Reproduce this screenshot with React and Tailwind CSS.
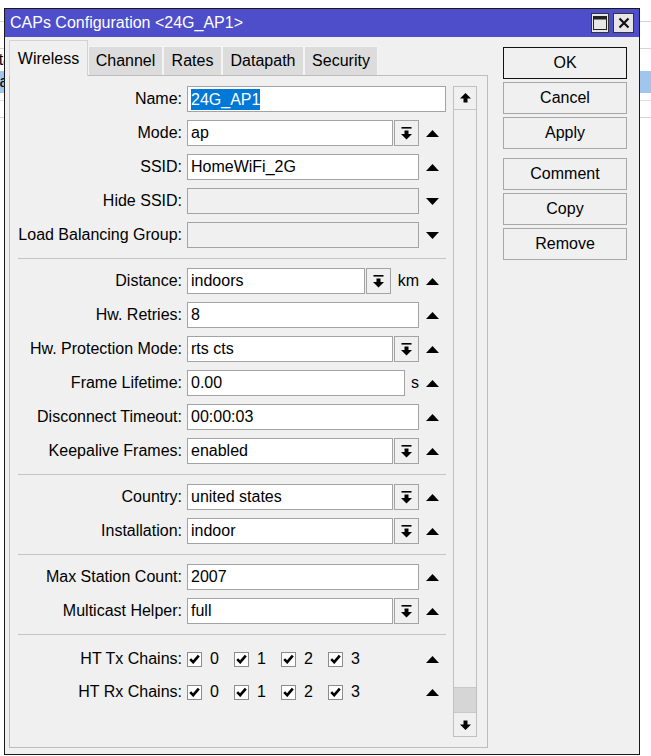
import React from "react";

const FONT = "font-['Liberation_Sans',Arial,sans-serif]";

function UpTri() {
  return (
    <svg width="13" height="7" viewBox="0 0 13 7">
      <polygon points="0,7 13,7 6.5,0" fill="#000" />
    </svg>
  );
}
function DownTri() {
  return (
    <svg width="13" height="7" viewBox="0 0 13 7">
      <polygon points="0,0 13,0 6.5,7" fill="#000" />
    </svg>
  );
}
function DropIcon() {
  return (
    <svg width="11" height="13" viewBox="0 0 11 13">
      <rect x="0.5" y="0" width="10" height="1.6" fill="#000" />
      <rect x="3.5" y="3.5" width="4" height="3.5" fill="#000" />
      <polygon points="0,7 11,7 5.5,12.5" fill="#000" />
    </svg>
  );
}
function ScrollArrow({ down }) {
  return (
    <svg width="11" height="10" viewBox="0 0 11 10" style={down ? { transform: "rotate(180deg)" } : undefined}>
      <polygon points="0,5.5 11,5.5 5.5,0" fill="#000" />
      <rect x="3.5" y="5" width="4" height="4.5" fill="#000" />
    </svg>
  );
}
function Check() {
  return (
    <div className="w-[15px] h-[15px] bg-white border border-[#8c8c8c] flex items-center justify-center">
      <svg width="11" height="10" viewBox="0 0 11 10">
        <path d="M1.2 5.2 L4.2 8.2 L9.8 1.6" stroke="#000" strokeWidth="2.6" fill="none" />
      </svg>
    </div>
  );
}

function Input({ children, className = "", disabled }) {
  return (
    <div
      className={`h-[26px] border border-[#a3a3a3] flex items-center pl-[3px] whitespace-nowrap overflow-hidden ${
        disabled ? "bg-[#f0f0f0]" : "bg-white"
      } ${className}`}
    >
      {children}
    </div>
  );
}
function DropBtn() {
  return (
    <div className="w-[25px] h-[26px] ml-[1px] border border-[#a3a3a3] bg-[#f0f0f0] flex items-center justify-center shrink-0">
      <DropIcon />
    </div>
  );
}

function Row({ label, children, arrow = "up", h = "h-[26px]" }) {
  return (
    <div className={`flex items-center ${h}`}>
      <span className="w-[172px] text-right shrink-0 whitespace-nowrap">{label}</span>
      <div className="ml-[5px] flex items-center">{children}</div>
      {arrow && (
        <div className="w-[27px] flex justify-center">{arrow === "up" ? <UpTri /> : <DownTri />}</div>
      )}
    </div>
  );
}

function Field({ value, disabled }) {
  return <Input className="w-[232px]" disabled={disabled}>{value}</Input>;
}
function Combo({ value }) {
  return (
    <div className="flex w-[232px]">
      <Input className="flex-1">{value}</Input>
      <DropBtn />
    </div>
  );
}

function Sep() {
  return <div className="h-px bg-[#c4c4c4] ml-[8px] mt-[10px] mb-[9px]" />;
}

function Chains({ label }) {
  return (
    <Row label={label} h="h-[30px]">
      <div className="flex w-[232px] items-center">
        {["0", "1", "2", "3"].map((d) => (
          <div key={d} className="flex items-center w-[47px]">
            <Check />
            <span className="ml-[8px]">{d}</span>
          </div>
        ))}
      </div>
    </Row>
  );
}

function Btn({ children, primary, className = "" }) {
  return (
    <div
      className={`h-[32px] flex items-center justify-center bg-[#f0f0f0] border ${
        primary ? "border-[#111]" : "border-[#a8a8a8]"
      } ${className}`}
    >
      {children}
    </div>
  );
}

const tabs = [
  { t: "Channel", w: "w-[75px]" },
  { t: "Rates", w: "w-[59px]" },
  { t: "Datapath", w: "w-[82px]" },
  { t: "Security", w: "w-[74px]" },
];

export default function App() {
  return (
    <div className={`relative w-[651px] h-[756px] bg-white overflow-hidden text-[16px] text-black ${FONT}`}>
      {/* background list behind the window */}
      <div className="flex flex-col">
        <div className="h-[22px] border-b border-[#d4d4d4]" />
        <div className="h-[27px] border-b border-[#d4d4d4]" />
        <div className="h-[22px] flex items-center">
          <span className="-ml-[12px]">Sta</span>
        </div>
        <div className="h-[22px] bg-[#a2c5ee] flex items-center">
          <span className="-ml-[12px]">Ca</span>
        </div>
        <div className="h-[8px] border-b border-[#e0e0e0]" />
        <div className="h-[17px] border-b border-[#d4d4d4]" />
      </div>

      {/* window */}
      <div className="absolute left-[4px] top-[8px] w-[636px] h-[747px] border border-[#1a1a1a] bg-[#f0f0f0] flex flex-col">
        <div className="h-[28px] bg-[#4e4ecb] flex items-center justify-between pl-[5px] pr-[5px] shrink-0">
          <span className="text-white whitespace-nowrap">CAPs Configuration &lt;24G_AP1&gt;</span>
          <div className="flex items-center gap-[4px]">
            <div className="w-[18px] h-[20px] bg-[#e6e6e6] border border-[#333] flex items-center justify-center">
              <svg width="14" height="14" viewBox="0 0 14 14">
                <rect x="0.5" y="0.5" width="13" height="13" fill="none" stroke="#222" strokeWidth="1" />
                <rect x="0.5" y="0.5" width="13" height="3" fill="#222" />
              </svg>
            </div>
            <div className="w-[21px] h-[20px] bg-[#e6e6e6] border border-[#333] flex items-center justify-center">
              <svg width="12" height="12" viewBox="0 0 12 12">
                <path d="M1.5 1.5 L10.5 10.5 M10.5 1.5 L1.5 10.5" stroke="#111" strokeWidth="2.2" />
              </svg>
            </div>
          </div>
        </div>

        <div className="flex pl-[4px] pt-[3px]">
          {/* left: tabs + panel */}
          <div className="flex flex-col w-[479px]">
            <div className="flex items-end h-[35px]">
              <div className="relative z-10 w-[79px] h-[36px] -mb-px bg-[#f0f0f0] border-l border-t border-r border-[#d2d2d2] flex items-center justify-center">
                Wireless
              </div>
              {tabs.map((t) => (
                <div
                  key={t.t}
                  className={`${t.w} h-[29px] bg-[#dcdcdc] border-l border-t border-r border-[#f4f4f4] flex items-center justify-center`}
                >
                  {t.t}
                </div>
              ))}
            </div>
            <div className="h-[673px] border border-[#bdbdbd] flex">
              <div className="w-[436px] pt-[10px] flex flex-col">
                <div className="flex flex-col gap-[8px]">
                  <Row label="Name:" arrow={null}>
                    <Input className="w-[259px]">
                      <span className="bg-[#0078d7] text-white leading-[21px]">24G_AP1</span>
                    </Input>
                  </Row>
                  <Row label="Mode:">
                    <Combo value="ap" />
                  </Row>
                  <Row label="SSID:">
                    <Field value="HomeWiFi_2G" />
                  </Row>
                  <Row label="Hide SSID:" arrow="down">
                    <Field disabled />
                  </Row>
                  <Row label="Load Balancing Group:" arrow="down">
                    <Field disabled />
                  </Row>
                </div>
                <Sep />
                <div className="flex flex-col gap-[8px]">
                  <Row label="Distance:">
                    <div className="flex w-[232px] items-center">
                      <Input className="flex-1">indoors</Input>
                      <DropBtn />
                      <span className="w-[28px] text-right">km</span>
                    </div>
                  </Row>
                  <Row label="Hw. Retries:">
                    <Field value="8" />
                  </Row>
                  <Row label="Hw. Protection Mode:">
                    <Combo value="rts cts" />
                  </Row>
                  <Row label="Frame Lifetime:">
                    <div className="flex w-[232px] items-center">
                      <Input className="flex-1">0.00</Input>
                      <span className="w-[14px] text-right">s</span>
                    </div>
                  </Row>
                  <Row label="Disconnect Timeout:">
                    <Field value="00:00:03" />
                  </Row>
                  <Row label="Keepalive Frames:">
                    <Combo value="enabled" />
                  </Row>
                </div>
                <Sep />
                <div className="flex flex-col gap-[8px]">
                  <Row label="Country:">
                    <Combo value="united states" />
                  </Row>
                  <Row label="Installation:">
                    <Combo value="indoor" />
                  </Row>
                </div>
                <Sep />
                <div className="flex flex-col gap-[8px]">
                  <Row label="Max Station Count:">
                    <Field value="2007" />
                  </Row>
                  <Row label="Multicast Helper:">
                    <Combo value="full" />
                  </Row>
                </div>
                <Sep />
                <div className="flex flex-col gap-[3px]">
                  <Chains label="HT Tx Chains:" />
                  <Chains label="HT Rx Chains:" />
                </div>
              </div>
              {/* scrollbar */}
              <div className="ml-[7px] mt-[10px] w-[24px] h-[651px] border border-[#c0c0c0] flex flex-col">
                <div className="h-[23px] border-b border-[#c8c8c8] flex items-center justify-center">
                  <ScrollArrow />
                </div>
                <div className="flex-1" />
                <div className="h-[26px] bg-[#d6d6d6] border-y border-[#c8c8c8]" />
                <div className="h-[23px] flex items-center justify-center">
                  <ScrollArrow down />
                </div>
              </div>
            </div>
          </div>

          {/* right: buttons */}
          <div className="ml-[15px] mt-[7px] w-[124px] flex flex-col">
            <div className="flex flex-col gap-[3px]">
              <Btn primary>OK</Btn>
              <Btn>Cancel</Btn>
              <Btn>Apply</Btn>
            </div>
            <div className="flex flex-col gap-[3px] mt-[9px]">
              <Btn>Comment</Btn>
              <Btn>Copy</Btn>
              <Btn>Remove</Btn>
            </div>
          </div>
        </div>
      </div>
    </div>
  );
}
